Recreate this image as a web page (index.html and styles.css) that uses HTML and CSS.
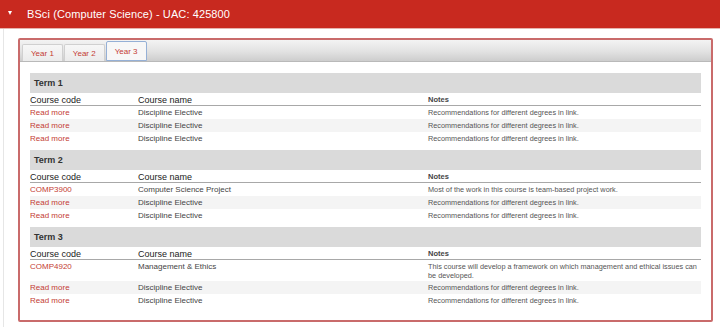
FILE: index.html
```html
<!DOCTYPE html>
<html lang="en">
<head>
    <meta charset="UTF-8">
    <meta name="viewport" content="width=device-width, initial-scale=1.0">
    <title>BSci (Computer Science)</title>
    <link rel="stylesheet" href="styles.css">
</head>
<body>

    <!-- degree accordion header -->
    <div class="degree-header">
        <span class="toggle-arrow"></span>
        <h2 class="degree-title">BSci (Computer Science) - UAC: 425800</h2>
    </div>

    <div class="degree-body">
        <div class="panel">
            <!-- year tabs -->
            <div class="tab-strip">
                <a class="tab" href="#">Year 1</a>
                <a class="tab" href="#">Year 2</a>
                <a class="tab active" href="#">Year 3</a>
            </div>

            <div class="panel-content">
                <!-- Term 1 -->
                <div class="term">
                    <div class="term-title">Term 1</div>
                    <table class="course-table">
                        <colgroup><col class="col-code"><col class="col-name"><col></colgroup>
                        <thead>
                            <tr><th>Course code</th><th>Course name</th><th class="notes">Notes</th></tr>
                        </thead>
                        <tbody>
                            <tr><td><a href="#">Read more</a></td><td>Discipline Elective</td><td class="notes">Recommendations for different degrees in link.</td></tr>
                            <tr><td><a href="#">Read more</a></td><td>Discipline Elective</td><td class="notes">Recommendations for different degrees in link.</td></tr>
                            <tr><td><a href="#">Read more</a></td><td>Discipline Elective</td><td class="notes">Recommendations for different degrees in link.</td></tr>
                        </tbody>
                    </table>
                </div>

                <!-- Term 2 -->
                <div class="term">
                    <div class="term-title">Term 2</div>
                    <table class="course-table">
                        <colgroup><col class="col-code"><col class="col-name"><col></colgroup>
                        <thead>
                            <tr><th>Course code</th><th>Course name</th><th class="notes">Notes</th></tr>
                        </thead>
                        <tbody>
                            <tr><td><a href="#">COMP3900</a></td><td>Computer Science Project</td><td class="notes">Most of the work in this course is team-based project work.</td></tr>
                            <tr><td><a href="#">Read more</a></td><td>Discipline Elective</td><td class="notes">Recommendations for different degrees in link.</td></tr>
                            <tr><td><a href="#">Read more</a></td><td>Discipline Elective</td><td class="notes">Recommendations for different degrees in link.</td></tr>
                        </tbody>
                    </table>
                </div>

                <!-- Term 3 -->
                <div class="term">
                    <div class="term-title">Term 3</div>
                    <table class="course-table">
                        <colgroup><col class="col-code"><col class="col-name"><col></colgroup>
                        <thead>
                            <tr><th>Course code</th><th>Course name</th><th class="notes">Notes</th></tr>
                        </thead>
                        <tbody>
                            <tr><td><a href="#">COMP4920</a></td><td>Management &amp; Ethics</td><td class="notes">This course will develop a framework on which management and ethical issues can be developed.</td></tr>
                            <tr><td><a href="#">Read more</a></td><td>Discipline Elective</td><td class="notes">Recommendations for different degrees in link.</td></tr>
                            <tr><td><a href="#">Read more</a></td><td>Discipline Elective</td><td class="notes">Recommendations for different degrees in link.</td></tr>
                        </tbody>
                    </table>
                </div>
            </div>
        </div>
    </div>

</body>
</html>
```

FILE: styles.css
```css
* {
    margin: 0;
    padding: 0;
    box-sizing: border-box;
}

body {
    font-family: "Liberation Sans", Arial, sans-serif;
    background: #ffffff;
    color: #444;
}

/* red accordion header */
.degree-header {
    display: flex;
    align-items: center;
    height: 29px;
    background-color: #c8291f;
    border-bottom: 1px solid #e6b3ae;
    padding-left: 8px;
}

.toggle-arrow {
    width: 0;
    height: 0;
    border-left: 2px solid transparent;
    border-right: 2px solid transparent;
    border-top: 4px solid #ffffff;
    margin-right: 15px;
    margin-top: -2px;
}

.degree-title {
    font-size: 11px;
    font-weight: normal;
    color: #ffffff;
    letter-spacing: 0.1px;
}

/* body area under the header */
.degree-body {
    margin-left: 3px;
    border-left: 1px solid #e6e6e6;
    padding: 9px 7px 5px 14px;
}

.panel {
    border: 2px solid #c96b6b;
    border-radius: 2px;
}

/* tabs */
.tab-strip {
    display: flex;
    align-items: flex-end;
    gap: 1px;
    height: 22px;
    padding-left: 2px;
    background: linear-gradient(to bottom, #f3f3f3 0%, #e2e2e2 55%, #cdcdcd 100%);
    border-bottom: 1px solid #b9b9b9;
}

.tab {
    display: flex;
    align-items: center;
    height: 17px;
    padding: 0 8px;
    font-size: 8px;
    color: #c43c34;
    text-decoration: none;
    background: linear-gradient(to bottom, #f7f7f7, #ebebeb);
    border: 1px solid #d0d0d0;
    border-bottom: none;
    border-radius: 2px 2px 0 0;
}

.tab.active {
    height: 20px;
    background: #f7f7f7;
    border: 1px solid #95b0d6;
}

.panel-content {
    padding: 11px 10px 13px 10px;
}

.term + .term {
    margin-top: 5px;
}

.term-title {
    height: 20px;
    line-height: 20px;
    padding-left: 4px;
    background-color: #dadada;
    font-size: 9px;
    font-weight: bold;
    color: #333;
}

/* course tables */
.course-table {
    width: 100%;
    border-collapse: collapse;
    table-layout: fixed;
}

.course-table .col-code {
    width: 108px;
}

.course-table .col-name {
    width: 290px;
}

.course-table th {
    text-align: left;
    font-weight: normal;
    font-size: 9px;
    color: #222;
    line-height: 10px;
    padding: 2px 0 0;
    border-bottom: 1px solid #a8a8a8;
}

.course-table th.notes {
    font-size: 7.5px;
    font-weight: bold;
    color: #444;
}

.course-table td {
    font-size: 8px;
    line-height: 10px;
    padding: 2px 0 1px;
    vertical-align: top;
    color: #444;
}

.course-table td.notes {
    font-size: 7.3px;
    line-height: 9px;
    color: #555;
}

.course-table tbody tr:nth-child(even) td {
    background-color: #f4f4f4;
}

.course-table a {
    color: #c43c34;
    text-decoration: none;
}
```
